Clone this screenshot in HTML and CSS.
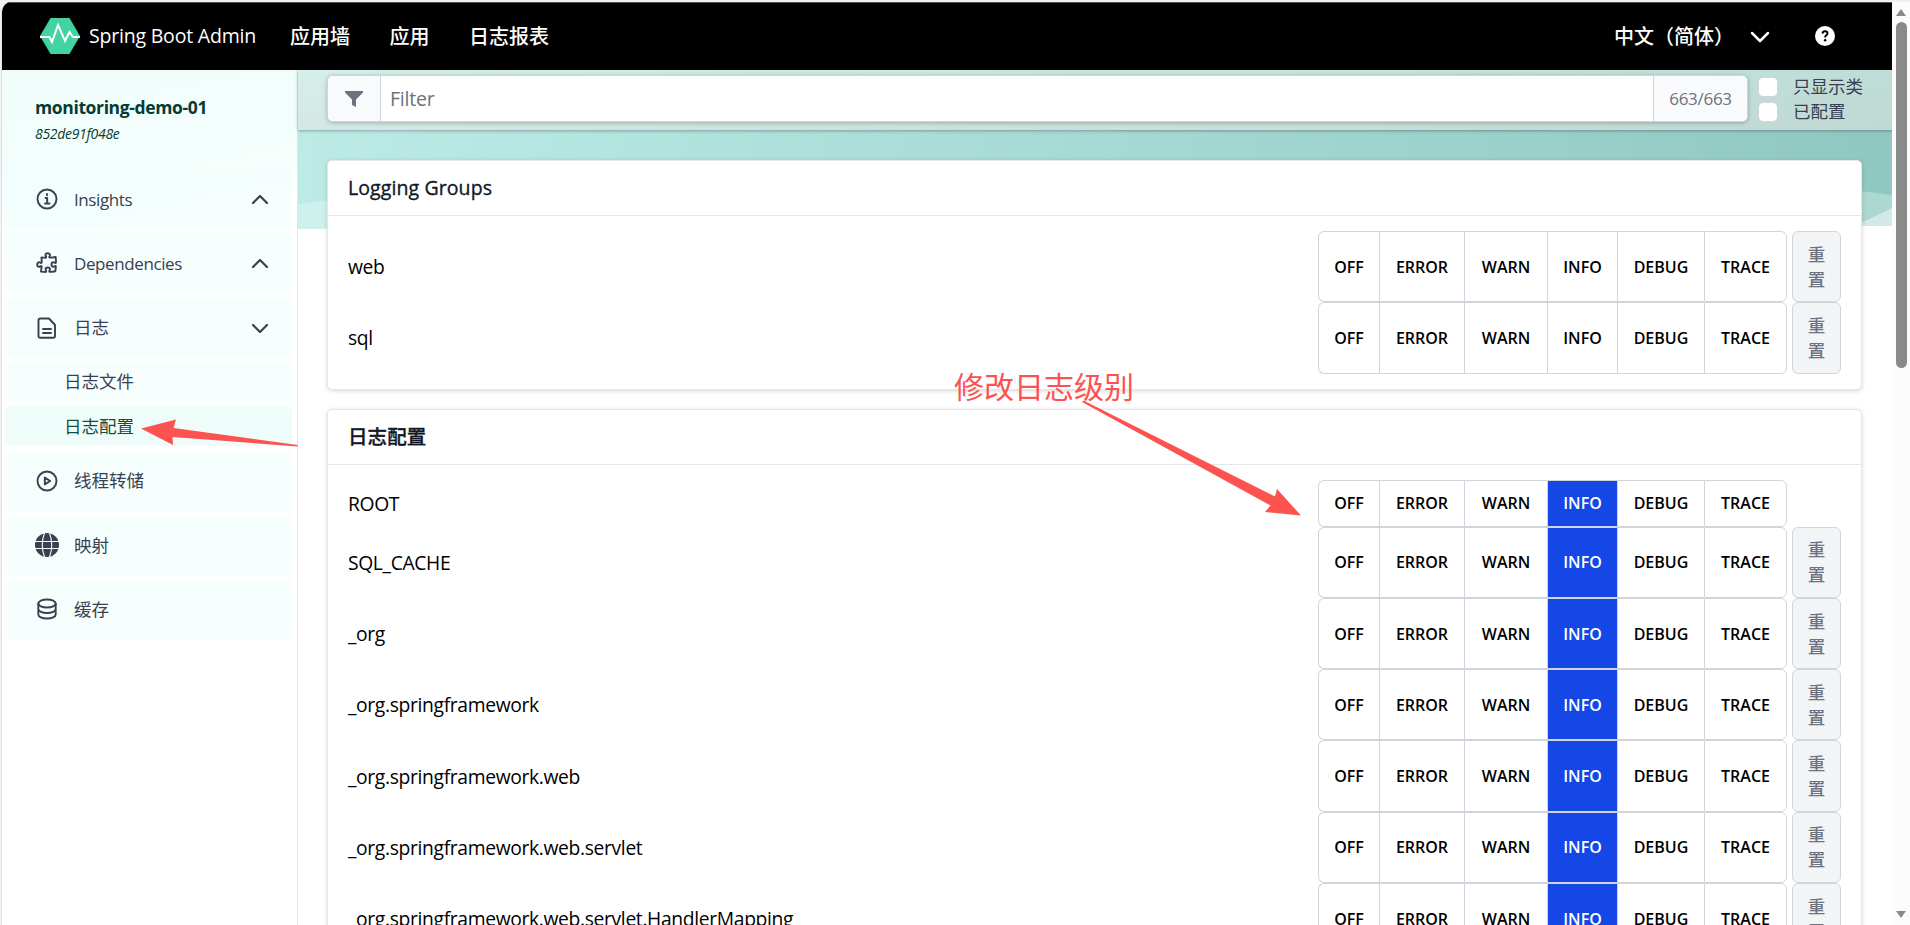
FILE: index.html
```html
<!DOCTYPE html>
<html lang="zh-CN">
<head>
<meta charset="utf-8">
<title>Spring Boot Admin</title>
<link rel="stylesheet" href="styles.css">
</head>
<body>
<div class="window">
  <div class="page">
    <header class="navbar">
      <svg class="logo" viewBox="0 0 40 36"><path fill="#42d3a5" d="M10.500 0h19L40 18 29.500 36h-19L0 18z"/><path fill="none" stroke="#fff" stroke-width="2" d="M0 19h9.500l2.500 5 6-17 7 16 4.500-9 3.500 5h7"/></svg>
      <span class="brand">Spring Boot Admin</span>
      <nav class="links"><a>应用墙</a><a>应用</a><a>日志报表</a></nav>
      <div class="nav-right">
        <span>中文（简体）</span>
        <svg class="nav-chevron" viewBox="0 0 20 12"><path d="M2 2l8 8 8-8"/></svg>
        <svg class="help" viewBox="0 0 20 20"><circle cx="10" cy="10" r="10" fill="#fff"/><path d="M7.500 7.600C7.700 6 8.700 5.300 10 5.300c1.500 0 2.500.9 2.500 2.200 0 1.800-2.400 1.900-2.400 3.900" fill="none" stroke="#000" stroke-width="1.900"/><circle cx="10.100" cy="14.300" r="1.250"/></svg>
      </div>
    </header>
    <div class="body">
      <aside class="sidebar">
        <div class="instance"><div class="name">monitoring-demo-01</div><div class="id">852de91f048e</div></div>
        <a class="item"><svg viewBox="0 0 24 24"><circle cx="12" cy="12" r="9.500"/><path d="M10.500 11h1.700v5.500M10 16.500h4.500"/><path d="M12 7v1.200"/></svg><span class="latin">Insights</span><svg class="chev" viewBox="0 0 18 12"><path d="M2 10l7-7 7 7"/></svg></a>
        <a class="item"><svg viewBox="0 0 24 24"><path d="M14.250 6.087c0-.355.186-.676.401-.959.221-.29.349-.634.349-1.003 0-1.036-1.007-1.875-2.250-1.875s-2.250.84-2.250 1.875c0 .369.128.713.349 1.003.215.283.401.604.401.959 0 .358-.297.65-.655.64a48.400 48.400 0 0 1-4.163-.3c.186 1.613.293 3.250.315 4.907a.66.66 0 0 1-.658.663c-.355 0-.676-.186-.959-.401a1.650 1.650 0 0 0-1.003-.349c-1.036 0-1.875 1.007-1.875 2.250s.84 2.250 1.875 2.250c.369 0 .713-.128 1.003-.349.283-.215.604-.401.959-.401.310 0 .555.260.532.570a48 48 0 0 1-.642 5.056c1.518.190 3.058.309 4.616.354a.64.64 0 0 0 .657-.643c0-.355-.186-.676-.401-.959a1.650 1.650 0 0 1-.349-1.003c0-1.035 1.008-1.875 2.250-1.875 1.243 0 2.250.84 2.250 1.875 0 .369-.128.713-.349 1.003-.215.283-.400.604-.400.959 0 .333.277.599.610.580a48 48 0 0 0 5.427-.630 48 48 0 0 0 .582-4.717.53.53 0 0 0-.533-.570c-.355 0-.676.186-.959.401-.290.221-.634.349-1.003.349-1.035 0-1.875-1.007-1.875-2.250s.84-2.250 1.875-2.250c.370 0 .713.128 1.003.349.283.215.604.401.960.401a.66.66 0 0 0 .658-.663 48 48 0 0 0-.370-5.360c-1.886.342-3.810.574-5.766.689a.58.58 0 0 1-.610-.580z"/></svg><span class="latin">Dependencies</span><svg class="chev" viewBox="0 0 18 12"><path d="M2 10l7-7 7 7"/></svg></a>
        <a class="item"><svg viewBox="0 0 24 24"><path d="M5.300 2.500H14l6 6.500v11q0 1.800-1.800 1.800H5.300Q3.500 21.800 3.500 20V4.300Q3.500 2.500 5.300 2.500zM8 13h8M8 17h8"/></svg><span>日志</span><svg class="chev" viewBox="0 0 18 12"><path d="M2 3l7 7 7-7"/></svg></a>
        <a class="item sub"><span>日志文件</span></a>
        <a class="item sub active"><span>日志配置</span></a>
        <a class="item"><svg viewBox="0 0 24 24"><circle cx="12" cy="12" r="9.500"/><path d="M9.800 8.600v6.800l5.400-3.400z"/></svg><span>线程转储</span></a>
        <a class="item"><svg viewBox="0 0 24 24"><circle class="solid" cx="12" cy="12" r="12"/><path class="grid" d="M0 8.500h24M0 15.500h24M9.500 0q-4.500 12 0 24M14.500 0q4.500 12 0 24"/></svg><span>映射</span></a>
        <a class="item"><svg viewBox="0 0 24 24"><ellipse cx="12" cy="6.500" rx="8.700" ry="4"/><path d="M3.300 6.500v11c0 2.200 3.900 4 8.700 4s8.700-1.800 8.700-4v-11M3.300 12c0 2.200 3.900 4 8.700 4s8.700-1.800 8.700-4"/></svg><span>缓存</span></a>
      </aside>
      <main class="main">
        <svg class="backdrop" viewBox="0 0 1595 160" preserveAspectRatio="none"><defs><linearGradient id="g" x1="0" x2="1"><stop offset="0" stop-color="#bcebe6"/><stop offset="1" stop-color="#8fc8c1"/></linearGradient></defs><path fill="url(#g)" d="M0 0h1595v156h-60L60 159H0z"/><path fill="#cff1ee" d="M0 134l40-5v30H0z"/><path fill="#add8d2" d="M1540 118l55 7v31h-55z"/><path fill="#d2eae7" d="M1558 156l37-18v18z"/></svg>
        <div class="filterbar">
          <div class="filter"><div class="addon"><svg class="funnel" viewBox="0 0 18 16"><path d="M0 0h18v1.500l-7 7V16l-4-2V8.500l-7-7z"/></svg></div><div class="input">Filter</div><div class="addon count">663/663</div></div>
          <div class="checks"><label><i></i><span>只显示类</span></label><label><i></i><span>已配置</span></label></div>
        </div>
        <div class="content">
          <section class="card"><h2>Logging Groups</h2><div class="rows" id="groups"></div></section>
          <section class="card"><h2>日志配置</h2><div class="rows" id="loggers"></div></section>
        </div>
      </main>
    </div>
  </div>
  <div class="scrollbar"><i class="up"></i><i class="thumb"></i><i class="down"></i></div>
</div>
<svg class="arrows" viewBox="0 0 1910 925"><path d="M141 428.500l35-9-2.500 8.500L297.500 445v1.500L172.500 437l.5 8z"/><path d="M1082 402l1.500-1.500L1275 496.500l2-7.500 24 26.500-36-3.500 5.500-6.500z"/></svg>
<div class="note">修改日志级别</div>
<script src="app.js"></script>
</body>
</html>
```
FILE: app.js
```js
const levels = ['OFF', 'ERROR', 'WARN', 'INFO', 'DEBUG', 'TRACE'];

function addRow(host, name, active, resettable) {
  const row = document.createElement('div');
  row.className = 'row' + (resettable ? '' : ' short');
  const buttons = levels
    .map(l => `<button class="${l === active ? 'on' : ''}">${l}</button>`)
    .join('');
  row.innerHTML = `<span class="logger">${name}</span><div class="levels">${buttons}</div>` +
    (resettable ? '<button class="reset">重<br>置</button>' : '<span class="gap"></span>');
  host.appendChild(row);
}

const groups = document.getElementById('groups');
['web', 'sql'].forEach(n => addRow(groups, n, null, true));

const loggers = document.getElementById('loggers');
['ROOT', 'SQL_CACHE', '_org', '_org.springframework', '_org.springframework.web',
  '_org.springframework.web.servlet', '_org.springframework.web.servlet.HandlerMapping']
  .forEach(n => addRow(loggers, n, 'INFO', n !== 'ROOT'));
```
FILE: styles.css
```css
* { box-sizing: border-box; }
body { margin: 0; height: 925px; overflow: hidden; background: #f1f1f2; font-family: "Open Sans", "Noto Sans CJK SC", sans-serif; font-size: 20px; color: #000; }
.window { display: flex; height: 925px; padding: 2px 0 0 1px; overflow: hidden; }
.page { width: 1891px; height: 923px; background: #fff; border-radius: 10px 0 0 0; overflow: hidden; border-left: 1px solid #e3e4e6; }
.navbar { height: 68px; background: #000; border-top: 1px solid #555; color: #fff; display: flex; align-items: center; padding: 0 0 2px 38px; font-weight: 500; }
.logo { width: 40px; height: 36px; }
.brand { margin-left: 9px; width: 201px; font-size: 19.500px; letter-spacing: -0.2px; white-space: nowrap; }
.links { display: flex; gap: 39.500px; }
.nav-right { margin-left: auto; display: flex; align-items: center; padding-right: 57px; }
.nav-right > span { white-space: nowrap; }
.nav-chevron { width: 20px; height: 12px; margin: 2px 0 0 16px; }
.nav-chevron path { fill: none; stroke: #fff; stroke-width: 2.500; stroke-linecap: round; stroke-linejoin: round; }
.help { width: 20px; height: 20px; margin-left: 45px; }
.body { display: flex; height: 855px; }
.sidebar { width: 296px; border-right: 1px solid #e2e5e8; padding: 0 5px 0 3px; background: linear-gradient(168deg, #f0fdfb 0, #f3fefc 120px, #fff 190px); color: #374151; }
.instance { height: 95px; padding: 24px 0 0 30px; margin-bottom: 4px; color: #063b33; }
.name { font-weight: 700; font-size: 17.500px; line-height: 27px; letter-spacing: -0.37px; }
.id { font-style: italic; font-size: 14px; line-height: 25px; letter-spacing: -0.3px; }
.item { display: flex; align-items: center; height: 60px; margin-bottom: 4.300px; padding: 0 23px 0 30px; border-radius: 6px; background: rgba(240, 253, 253, .5); font-size: 17.500px; }
.item > span { position: relative; top: -1px; }
.item > .latin { font-size: 17px; letter-spacing: -0.4px; top: 0; }
.item > svg { width: 24px; height: 24px; margin-right: 15px; fill: none; stroke: #374151; stroke-width: 1.900; stroke-linecap: round; stroke-linejoin: round; }
.item > svg.chev { width: 18px; height: 12px; margin: 0 0 0 auto; stroke-width: 2.200; }
.item .solid { fill: #374151; stroke: none; }
.item .grid { stroke: #f8fefe; stroke-width: 1.100; }
.item.sub { height: 40px; padding-left: 59px; margin-bottom: 4.500px; }
.item.active { background: #effdfa; color: #134e40; }
.main { flex: 1; min-width: 0; position: relative; }
.backdrop { position: absolute; left: 0; top: 0; width: 100%; height: 160px; }
.filterbar { position: relative; height: 60px; padding: 5px 29px 0 29px; display: flex; background: linear-gradient(rgba(238, 242, 238, .5), rgba(232, 230, 226, .55)); box-shadow: 0 1px 3px rgba(0, 0, 0, .3); }
.filter { display: flex; width: 1421px; height: 47px; border: 1px solid #d1d5db; border-radius: 6px; background: #fff; overflow: hidden; box-shadow: 0 1px 4px rgba(0, 0, 0, .25); }
.addon { width: 53px; background: #f9fafb; border-right: 1px solid #d1d5db; display: flex; align-items: center; justify-content: center; color: #6b7280; }
.count { width: 94px; border: 0; border-left: 1px solid #d1d5db; font-size: 17px; letter-spacing: -0.3px; }
.funnel { width: 18px; height: 16px; fill: #6b7280; }
.input { flex: 1; padding-left: 9px; line-height: 45px; color: #6b7280; font-size: 19.500px; letter-spacing: -0.2px; }
.checks { margin: -1px 0 0 10px; }
.checks label { display: flex; align-items: center; height: 25px; font-size: 17.500px; color: #374151; white-space: nowrap; }
.checks label span { position: relative; top: -1px; }
.checks i { width: 20px; height: 20px; margin-right: 15px; background: #fff; border: 1px solid #d1d5db; border-radius: 5px; }
.content { position: relative; padding: 30px 30px 0 29px; }
.card { border: 1px solid #e5e7eb; border-radius: 5px; background: #fff; box-shadow: 0 1px 4px rgba(0, 0, 0, .16); margin-bottom: 19.600px; }
.card h2 { margin: 0; height: 55px; line-height: 54px; padding-left: 20px; border-bottom: 1px solid #e5e7eb; font-size: 19.500px; font-weight: 500; color: #111827; -webkit-text-stroke: .35px #111827; letter-spacing: .1px; }
.rows { padding: 15px 20px; }
.row { display: flex; height: 71.300px; }
.row.short { height: 46.400px; }
.logger { flex: 1; align-self: center; font-size: 19.300px; letter-spacing: -0.35px; }
.levels { display: grid; grid-template-columns: 61px 85px 83px 70px 87px 83px; width: 469px; }
button { font: 600 16px "Open Sans", "Noto Sans CJK SC", sans-serif; border: 1px solid #d1d5db; background: #fff; padding: 0; color: #000; border-right-width: 0; }
.levels button:first-child { border-radius: 6px 0 0 6px; }
.levels button:last-child { border-radius: 0 6px 6px 0; border-right-width: 1px; }
.levels .on { background: #1447e6; color: #fff; }
.reset { width: 49px; margin-left: 5px; border-width: 1px; border-radius: 6px; background: #f3f4f6; color: #6b7280; font-size: 17.500px; font-weight: 500; line-height: 25px; }
.gap { width: 54px; }
.scrollbar { width: 18px; background: #fcfcfc; display: flex; flex-direction: column; align-items: center; }
.up, .down { border: 5px solid transparent; border-top: 0; border-bottom: 7px solid #8a8a8a; margin-top: 7px; }
.thumb { width: 11px; height: 346px; margin-top: 6px; background: #8a8a8a; border-radius: 6px; }
.down { transform: rotate(180deg); margin-top: auto; margin-bottom: 7px; }
.arrows { position: absolute; left: 0; top: 0; width: 1910px; height: 925px; fill: #fc5350; }
.note { position: absolute; left: 954px; top: 365px; font-size: 30px; line-height: 44px; color: #fc5350; font-weight: 400; }
```
